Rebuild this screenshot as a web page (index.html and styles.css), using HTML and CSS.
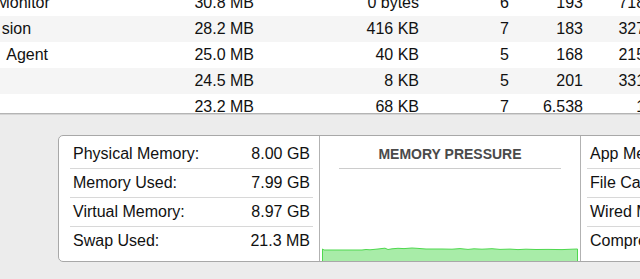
FILE: index.html
```html
<!DOCTYPE html>
<html>
<head>
<title>Activity Monitor - Memory</title>
<link rel="stylesheet" href="styles.css">
</head>
<body>
  <!-- lista de procesos, recortada arriba y abajo -->
  <div class="procesos">
    <div class="fila">
      <span class="nombre">y Monitor</span><span class="num">30.8 MB</span><span class="num c2">0 bytes</span><span class="num c3">6</span><span class="num c4">193</span><span class="num c5">7186</span>
    </div>
    <div class="fila gris">
      <span class="nombre">&nbsp;&nbsp;&nbsp;&nbsp;sion</span><span class="num">28.2 MB</span><span class="num c2">416 KB</span><span class="num c3">7</span><span class="num c4">183</span><span class="num c5">3271</span>
    </div>
    <div class="fila">
      <span class="nombre">&nbsp;&nbsp;&nbsp;&nbsp;&nbsp;Agent</span><span class="num">25.0 MB</span><span class="num c2">40 KB</span><span class="num c3">5</span><span class="num c4">168</span><span class="num c5">2154</span>
    </div>
    <div class="fila gris">
      <span class="nombre"></span><span class="num">24.5 MB</span><span class="num c2">8 KB</span><span class="num c3">5</span><span class="num c4">201</span><span class="num c5">3317</span>
    </div>
    <div class="fila">
      <span class="nombre"></span><span class="num">23.2 MB</span><span class="num c2">68 KB</span><span class="num c3">7</span><span class="num c4">6.538</span><span class="num c5">19</span>
    </div>
  </div>

  <div class="inferior">
    <div class="panel">
      <div class="col izq">
        <div class="dato"><span>Physical Memory:</span><span>8.00 GB</span></div>
        <div class="dato"><span>Memory Used:</span><span>7.99 GB</span></div>
        <div class="dato"><span>Virtual Memory:</span><span>8.97 GB</span></div>
        <div class="dato sin"><span>Swap Used:</span><span>21.3 MB</span></div>
      </div>

      <div class="col centro">
        <div class="titulo">MEMORY PRESSURE</div>
        <svg class="grafica" viewBox="0 0 256 15" preserveAspectRatio="none">
          <path d="M0.5 15 L0.5 3 L2 4 L40 4 L44 3.5 L48 3.8 L56 3 L60 2.5 L63 2.2 L66 3.5 L70 2.8 L76 2.3 L82 2.6 L90 2 L96 2.4 L104 3 L120 3 L130 3.2 L138 2.6 L146 3.4 L152 2.8 L160 3.2 L170 2.7 L178 3.4 L188 3.1 L196 3.6 L204 3.2 L214 3.5 L226 3.4 L240 3.6 L250 3.2 L255.5 3 L255.5 15 Z" class="area"/>
          <path d="M0.5 15 L0.5 3 L2 4 L40 4 L44 3.5 L48 3.8 L56 3 L60 2.5 L63 2.2 L66 3.5 L70 2.8 L76 2.3 L82 2.6 L90 2 L96 2.4 L104 3 L120 3 L130 3.2 L138 2.6 L146 3.4 L152 2.8 L160 3.2 L170 2.7 L178 3.4 L188 3.1 L196 3.6 L204 3.2 L214 3.5 L226 3.4 L240 3.6 L250 3.2 L255.5 3 L255.5 15" class="borde"/>
        </svg>
      </div>

      <div class="col der">
        <div class="dato"><span>App Memory:</span><span>5.12 GB</span></div>
        <div class="dato"><span>File Cache:</span><span>1.70 GB</span></div>
        <div class="dato"><span>Wired Memory:</span><span>1.04 GB</span></div>
        <div class="dato sin"><span>Compressed:</span><span>130.4 MB</span></div>
      </div>
    </div>
  </div>
</body>
</html>
```

FILE: styles.css
```css
body {
    margin: 0;
    background-color: #ECECEC;
    font-family: "Liberation Sans", Arial, sans-serif;
    font-size: 16px;
    color: #111111;
    overflow: hidden;
    width: 640px;
    height: 279px;
}

/* tabla de procesos */
.procesos {
    margin-top: -10px;
    height: 123px;
    overflow: hidden;
    background-color: white;
    border-bottom: 1px solid #B4B4B4;
    box-shadow: 0 1px 0 #D4D4D4;
}

.fila {
    display: grid;
    grid-template-columns: 166px 104px 165px 90px 74px 71px;
    height: 26px;
    line-height: 26px;
    margin-left: -16px;
    white-space: nowrap;
    width: 670px;
}

.gris { background-color: #F5F5F5; }

.nombre { text-align: left; overflow: hidden; }
.num { text-align: right; }

/* zona inferior con el panel de memoria */
.inferior {
    padding-top: 21px;
}

.panel {
    margin-left: 58px;
    width: 720px;
    height: 125px;
    background-color: white;
    border: 1px solid #A8A8A8;
    border-radius: 5px;
    display: flex;
}

.col {
    height: 125px;
    box-sizing: border-box;
    flex-shrink: 0;
}

.izq {
    width: 260px;
    padding: 4px 6px 0 11px;
}

.centro {
    width: 261px;
    border-left: 1px solid #B2B2B2;
    display: flex;
    flex-direction: column;
    justify-content: space-between;
}

.der {
    width: 200px;
    border-left: 1px solid #B2B2B2;
    padding: 4px 0 0 6px;
}

.dato {
    display: flex;
    justify-content: space-between;
    height: 28px;
    line-height: 28px;
    padding: 0 3px;
    border-bottom: 1px solid #D8D8D8;
    white-space: nowrap;
}

.dato.sin { border-bottom: none; }

.titulo {
    margin: 4px 19px 0 19px;
    height: 28px;
    line-height: 28px;
    text-align: center;
    font-size: 14px;
    font-weight: bold;
    color: #4A4A4A;
    border-bottom: 1px solid #CCCCCC;
}

.grafica {
    display: block;
    width: 256px;
    height: 15px;
    margin: 0 0 0 2px;
}

.area { fill: #A8ECA8; }
.borde { fill: none; stroke: #4FD84F; stroke-width: 1; }
```
